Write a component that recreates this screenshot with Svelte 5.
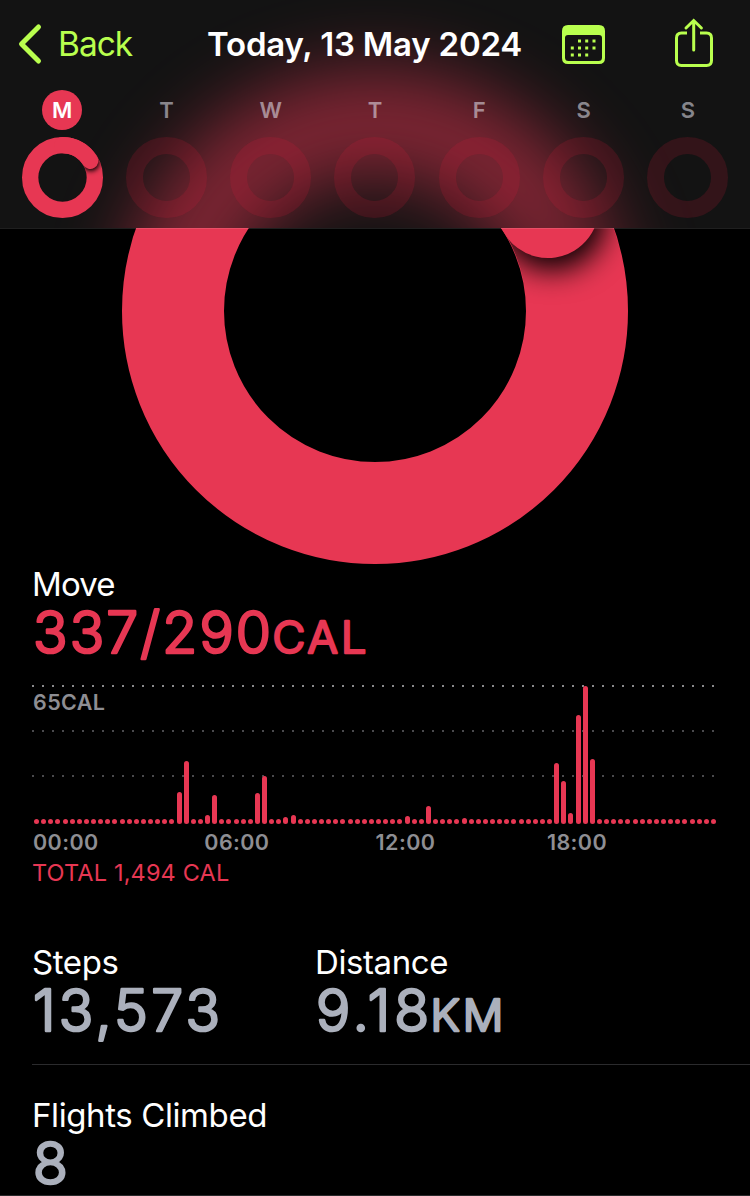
<script lang="ts">
  interface Figure {
    label: string;
    value: string;
    valueWidth: number;
    unit?: string;
    unitX?: number;
    unitWidth?: number;
  }

  const days = ['M', 'T', 'W', 'T', 'F', 'S', 'S'];
  const today = 0;

  const move: Figure = {
    label: 'Move',
    value: '337/290',
    valueWidth: 238,
    unit: 'CAL',
    unitX: 239.5,
    unitWidth: 97,
  };
  const steps: Figure = { label: 'Steps', value: '13,573', valueWidth: 187 };
  const distance: Figure = {
    label: 'Distance',
    value: '9.18',
    valueWidth: 113,
    unit: 'KM',
    unitX: 114.5,
    unitWidth: 76,
  };
  const flights: Figure = { label: 'Flights Climbed', value: '8', valueWidth: 36 };

  // One bar per quarter of an hour; anything missing is an idle dot.
  const BAR_COUNT = 96;
  const IDLE_HEIGHT = 5;
  const active: Record<number, number> = {
    20: 32, 21: 63, 24: 9, 25: 29, 31: 31, 32: 48, 35: 7, 36: 9,
    52: 8, 55: 18.5, 60: 6, 73: 61.5, 74: 43, 75: 11, 76: 109, 77: 138, 78: 65,
  };
  const bars = Array.from({ length: BAR_COUNT }, (_, i) => active[i] ?? IDLE_HEIGHT);
  const hours = ['00:00', '06:00', '12:00', '18:00'];
</script>

{#snippet ring(id: string)}
  <svg class="ring" viewBox="0 0 506 506" aria-hidden="true">
    <defs>
      <mask id="{id}-track" maskUnits="userSpaceOnUse" x="0" y="0" width="506" height="506">
        <circle cx="253" cy="253" r="202" fill="none" stroke="#fff" stroke-width="101" />
      </mask>
      <filter id="{id}-blur" x="-100%" y="-100%" width="300%" height="300%">
        <feGaussianBlur stdDeviation="15" />
      </filter>
    </defs>
    <circle cx="253" cy="253" r="202" fill="none" stroke="#e73753" stroke-width="102" />
    <g mask="url(#{id}-track)">
      <circle cx="430" cy="158" r="54" filter="url(#{id}-blur)" />
    </g>
    <path
      d="M253 51A202 202 0 0 1 426 149"
      fill="none"
      stroke="#e73753"
      stroke-width="102"
      stroke-linecap="round"
    />
  </svg>
{/snippet}

{#snippet figure(item: Figure)}
  <div class="figure">
    <div class="label">{item.label}</div>
    <svg class="value" width="350" height="64">
      <text x="0" y="49" font-size="57" textLength={item.valueWidth}>{item.value}</text>
      {#if item.unit}
        <text
          class="unit"
          x={item.unitX}
          y="49"
          font-size="43.5"
          textLength={item.unitWidth}
          lengthAdjust="spacingAndGlyphs">{item.unit}</text
        >
      {/if}
    </svg>
  </div>
{/snippet}

<div class="screen">
  <header>
    <div class="glow">{@render ring('glow')}</div>
    <nav>
      <button class="back">
        <svg width="26" height="42" viewBox="0 0 26 42">
          <path d="M21.500 4L4.500 21L21.500 38" />
        </svg>
        <span>Back</span>
      </button>
      <h1>Today, 13 May 2024</h1>
      <svg class="calendar" width="43" height="39" viewBox="0 0 43 39">
        <path
          fill-rule="evenodd"
          d="M6 0H37Q43 0 43 6V33Q43 39 37 39H6Q0 39 0 33V6Q0 0 6 0ZM6 10Q3 10 3 13V32.500Q3 36 6.500 36H36.500Q40 36 40 32.500V13Q40 10 37 10Z"
        />
        <path
          d="M16 14.500h3v3h-3zM23.200 14.500h3v3h-3zM30.500 14.500h3v3h-3zM8.800 21.500h3v3h-3zM16 21.500h3v3h-3zM23.200 21.500h3v3h-3zM30.500 21.500h3v3h-3zM8.800 28.500h3v3h-3zM16 28.500h3v3h-3zM23.200 28.500h3v3h-3z"
        />
      </svg>
      <svg class="share" width="40" height="50" viewBox="0 0 40 50">
        <path d="M13 15H7.500Q2.500 15 2.500 20V42.500Q2.500 47.500 7.500 47.500H32.500Q37.500 47.500 37.500 42.500V20Q37.500 15 32.500 15H26" />
        <path d="M19.700 32V3M12 10L19.700 2.500L27.400 10" stroke-linecap="round" />
      </svg>
    </nav>

    <div class="week">
      {#each days as day, i}
        <div class="day" class:today={i === today}>
          <span class="letter">{day}</span>
          {#if i === today}
            {@render ring('small')}
          {:else}
            <span class="empty"></span>
          {/if}
        </div>
      {/each}
    </div>
  </header>

  <main>
    <div class="hero">{@render ring('hero')}</div>

    <section class="move">
      {@render figure(move)}

      <div class="chart">
        <svg class="grid" width="682" height="92">
          <line class="top" x2="682" y1="1" y2="1" />
          <line x2="682" y1="46" y2="46" />
          <line x2="682" y1="91" y2="91" />
        </svg>
        <span class="scale">65CAL</span>
        <div class="bars">
          {#each bars as height}
            <i style="height: {height}px"></i>
          {/each}
        </div>
      </div>
      <div class="hours">
        {#each hours as hour}
          <span>{hour}</span>
        {/each}
      </div>
      <div class="total">TOTAL 1,494 CAL</div>
    </section>

    <section class="row">
      {@render figure(steps)}
      {@render figure(distance)}
    </section>
    <section class="row last">
      {@render figure(flights)}
    </section>
  </main>
</div>

<style>
  :global(body) {
    background: #000;
  }

  .screen {
    position: relative;
    width: 750px;
    height: 1196px;
    overflow: hidden;
    box-sizing: border-box;
    border-bottom: 1px solid #29292b;
    background: #000;
    color: #fff;
    font-family: Inter, "Liberation Sans", sans-serif;
  }

  header {
    position: absolute;
    inset: 0 0 auto;
    z-index: 1;
    height: 229px;
    overflow: hidden;
    box-sizing: border-box;
    border-bottom: 1px solid rgba(255, 255, 255, 0.12);
    background: #131313;
    background-clip: padding-box;
  }

  /* The scrolled ring, blurred, shining through the header. */
  .glow {
    position: absolute;
    top: 70px;
    left: 122px;
    width: 506px;
    opacity: 0.53;
    filter: blur(37px);
  }

  nav {
    position: relative;
    display: flex;
    align-items: center;
    height: 88px;
    padding: 0 36px 0 17px;
  }

  .back {
    display: flex;
    align-items: center;
    gap: 15px;
    width: 190px;
    padding: 0;
    border: 0;
    background: none;
    color: #b9ff4e;
    font: 400 33.5px/40px Inter, sans-serif;
    letter-spacing: -1px;
  }

  .back path {
    fill: none;
    stroke: #b9ff4e;
    stroke-width: 5;
    stroke-linecap: round;
    stroke-linejoin: round;
  }

  h1 {
    width: 355px;
    margin: 0;
    font-size: 33px;
    font-weight: 600;
    letter-spacing: -0.2px;
    line-height: 40px;
    white-space: nowrap;
  }

  .calendar {
    fill: #b9ff4e;
  }

  .share {
    margin: -2px 0 0 auto;
    fill: none;
    stroke: #b9ff4e;
    stroke-width: 3;
  }

  .week {
    position: relative;
    display: grid;
    grid-template-columns: repeat(7, 1fr);
    padding: 2px 10px 0;
  }

  .day {
    display: flex;
    flex-direction: column;
    align-items: center;
    gap: 7px;
  }

  .letter {
    width: 40px;
    border-radius: 50%;
    color: rgba(235, 235, 245, 0.55);
    font-size: 22px;
    font-weight: 600;
    line-height: 40px;
    text-align: center;
  }

  .today .letter {
    background: #e73753;
    color: #fff;
  }

  .day .ring,
  .empty {
    width: 81px;
    height: 81px;
    box-sizing: border-box;
  }

  .empty {
    border: 17px solid rgba(232, 30, 60, 0.15);
    border-radius: 50%;
  }

  .ring {
    display: block;
  }

  .hero {
    width: 506px;
    height: 506px;
    margin: 58px auto 0;
  }

  .label {
    height: 40px;
    margin-left: -1px;
    font-size: 33px;
    line-height: 40px;
    letter-spacing: -0.4px;
  }

  .value {
    display: block;
    overflow: visible;
    fill: #abb0bc;
    stroke: #abb0bc;
    stroke-width: 2.6px;
    stroke-linejoin: round;
    font-weight: 300;
  }

  .unit {
    letter-spacing: 3px;
  }

  .move {
    height: 378px;
    padding-left: 33px;
  }

  .move .label {
    letter-spacing: -0.9px;
  }

  .move .value {
    fill: #e73753;
    stroke: #e73753;
  }

  .chart {
    display: grid;
    width: 684px;
    height: 139px;
    margin: 17px 0 0 -1px;
  }

  .chart > * {
    grid-area: 1 / 1;
  }

  .grid line {
    stroke: #4a4a4d;
    stroke-width: 2;
    stroke-dasharray: 2 8;
  }

  .grid .top {
    stroke: #8a8a8d;
  }

  .scale,
  .hours {
    color: #8e8e93;
    font-size: 21.5px;
    font-weight: 600;
    letter-spacing: 0.4px;
  }

  .scale {
    margin: 4px 0 0 1px;
    line-height: 26px;
  }

  .bars {
    display: flex;
    align-items: flex-end;
    justify-content: space-between;
    padding-left: 2px;
  }

  .bars i {
    width: 5px;
    border-radius: 2.5px;
    background: #e73753;
  }

  .hours {
    display: grid;
    grid-template-columns: repeat(4, 171.3px);
    margin-top: 4px;
    line-height: 28px;
  }

  .total {
    margin: 2px 0 0 -1px;
    color: #e73753;
    font-size: 23.5px;
    line-height: 30px;
    letter-spacing: 0.15px;
  }

  .row {
    display: grid;
    grid-template-columns: 283px 1fr;
    height: 123px;
    box-sizing: border-box;
    margin-left: 32px;
    padding-left: 1px;
    border-bottom: 1px solid #2b2b2d;
  }

  .row.last {
    height: 131px;
    padding-top: 30px;
    border-bottom: 0;
  }
</style>
